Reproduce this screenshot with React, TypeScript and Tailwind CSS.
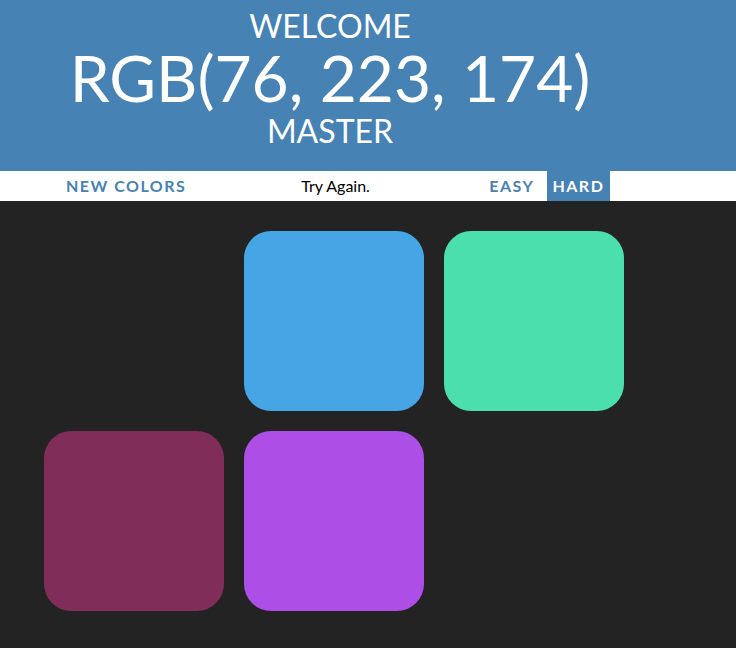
const squares = ['#232323', '#46a5e5', '#4cdfae', '#812d5a', '#ad4fe6', '#232323']

export default function App() {
  return (
    <div className="min-h-[648px] bg-[#232323] font-['Lato',sans-serif]">
      <header className="h-[171px] bg-[#4682b4]">
        <h1 className="flex w-[660px] flex-col items-center pt-[8px] font-normal uppercase text-white">
          <span className="text-[32px] leading-[35px]">Welcome</span>
          <span className="text-[64px] leading-[70px]">rgb(76, 223, 174)</span>
          <span className="text-[32px] leading-[35px]">Master</span>
        </h1>
      </header>
      <div className="flex h-[30px] w-[736px] items-stretch bg-white text-[16px]">
        <button className="ml-[60px] px-[6px] font-bold uppercase tracking-[1.5px] text-[#4682b4]">New Colors</button>
        <span className="ml-[109px] flex items-center text-black">Try Again.</span>
        <button className="ml-[113px] w-[58px] font-bold uppercase tracking-[1.5px] text-[#4682b4]">Easy</button>
        <button className="ml-[6px] w-[63px] bg-[#4682b4] font-bold uppercase tracking-[1.5px] text-white">Hard</button>
      </div>
      <div className="ml-[44px] mt-[30px] grid w-[580px] grid-cols-3 gap-[20px]">
        {squares.map((c, i) => (
          <div key={i} className="h-[180px] w-[180px] rounded-[27px]" style={{backgroundColor: c}} />
        ))}
      </div>
    </div>
  )
}
